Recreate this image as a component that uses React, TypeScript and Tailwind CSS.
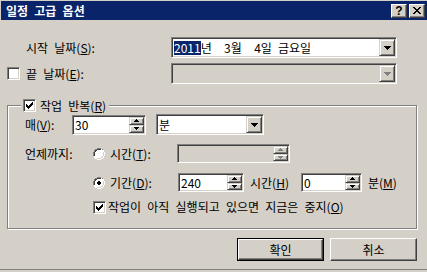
import React from "react";

const sunken =
  "border border-t-[#808080] border-l-[#808080] border-b-white border-r-white shadow-[inset_1px_1px_0_#404040,inset_-1px_-1px_0_#d4d0c8]";
const smallRaised =
  "border border-t-[#d4d0c8] border-l-[#d4d0c8] border-b-[#404040] border-r-[#404040] shadow-[inset_1px_1px_0_#fff,inset_-1px_-1px_0_#808080] bg-[#d4d0c8]";

function DownArrow({ disabled }: { disabled?: boolean }) {
  return (
    <svg width="7" height="4" viewBox="0 0 7 4" shapeRendering="crispEdges">
      <path d="M0 0H7V1H6V2H5V3H4V4H3V3H2V2H1V1H0Z" fill={disabled ? "#808080" : "#000"} />
    </svg>
  );
}

function SmallArrow({ up, disabled }: { up?: boolean; disabled?: boolean }) {
  return (
    <svg width="5" height="3" viewBox="0 0 5 3" shapeRendering="crispEdges">
      <path
        d={up ? "M2 0H3V1H4V2H5V3H0V2H1V1H2Z" : "M0 0H5V1H4V2H3V3H2V2H1V1H0Z"}
        fill={disabled ? "#808080" : "#000"}
      />
    </svg>
  );
}

function Combo({ className, disabled, children }: { className: string; disabled?: boolean; children?: React.ReactNode }) {
  return (
    <div className={`${className} h-[21px] flex p-[1px] ${sunken} ${disabled ? "bg-[#d4d0c8]" : "bg-white"}`}>
      <div className="flex-1 flex items-center pl-[1px] whitespace-pre overflow-hidden">{children}</div>
      <div className={`w-[16px] h-[17px] flex items-center justify-center ${smallRaised}`}>
        <DownArrow disabled={disabled} />
      </div>
    </div>
  );
}

function Spinner({ className, value, disabled }: { className: string; value?: string; disabled?: boolean }) {
  return (
    <div className={`${className} flex p-[1px] ${sunken} ${disabled ? "bg-[#d4d0c8]" : "bg-white"}`}>
      <div className="flex-1 flex items-center pl-[1px]">{value}</div>
      <div className="w-[15px] flex flex-col">
        <div className={`flex-1 flex items-center justify-center ${smallRaised}`}>
          <SmallArrow up disabled={disabled} />
        </div>
        <div className={`flex-1 flex items-center justify-center ${smallRaised}`}>
          <SmallArrow disabled={disabled} />
        </div>
      </div>
    </div>
  );
}

function Checkbox({ checked }: { checked?: boolean }) {
  return (
    <div className={`w-[13px] h-[13px] shrink-0 bg-white flex items-center justify-center ${sunken}`}>
      {checked && (
        <svg width="7" height="7" viewBox="0 0 7 7" shapeRendering="crispEdges">
          <path d="M6 0H7V3H6V4H5V5H4V6H3V7H2V6H1V5H0V2H1V3H2V4H3V3H4V2H5V1H6Z" fill="#000" />
        </svg>
      )}
    </div>
  );
}

function Radio({ checked }: { checked?: boolean }) {
  return (
    <svg width="12" height="12" viewBox="0 0 12 12" shapeRendering="crispEdges" className="shrink-0">
      <path d="M4 0H8V1H10V2H11V4H12V8H11V10H10V11H8V12H4V11H2V10H1V8H0V4H1V2H2V1H4Z" fill="#fff" />
      <path d="M4 0H8V1H10V2H9V1H4V2H2V4H1V8H0V4H1V2H2V1H4Z" fill="#808080" />
      <path d="M4 1H8V2H4V3H3V4H2V8H1V4H2V2H4Z" fill="#404040" />
      <path d="M4 2H8V3H9V4H10V8H9V9H8V10H4V9H3V8H2V4H3V3H4Z" fill="#fff" />
      <path d="M10 4H11V8H10V10H8V11H4V10H8V9H9V8H10Z" fill="#d4d0c8" />
      {checked && <path d="M5 4H7V5H8V7H7V8H5V7H4V5H5Z" fill="#000" />}
    </svg>
  );
}

function TitleBtn({ children }: { children: React.ReactNode }) {
  return (
    <div className="w-[16px] h-[14px] bg-[#d4d0c8] border border-t-white border-l-white border-b-[#404040] border-r-[#404040] shadow-[inset_-1px_-1px_0_#808080] flex items-center justify-center text-black font-bold text-[12px] leading-[12px] font-['Liberation_Sans',sans-serif]">
      {children}
    </div>
  );
}

function Button({ children, isDefault }: { children: React.ReactNode; isDefault?: boolean }) {
  if (isDefault) {
    return (
      <div className="w-[87px] h-[23px] border border-black">
        <div className="w-full h-full border border-t-white border-l-white border-b-[#404040] border-r-[#404040] shadow-[inset_-1px_-1px_0_#808080] flex items-center justify-center">
          {children}
        </div>
      </div>
    );
  }
  return (
    <div className="w-[87px] h-[23px] border border-t-white border-l-white border-b-[#404040] border-r-[#404040] shadow-[inset_-1px_-1px_0_#808080] flex items-center justify-center">
      {children}
    </div>
  );
}

export default function App() {
  return (
    <div className="w-[427px] h-[272px] bg-[#d4d0c8] overflow-hidden flex flex-col text-[12px] leading-[14px] [word-spacing:3.5px] text-black font-['Noto_Sans_CJK_KR','Noto_Sans',sans-serif] shadow-[inset_0_-2px_0_#d4d0c8,inset_0_-3px_0_#808080]">
      {/* Title bar */}
      <div className="mt-[1px] ml-[1px] h-[19px] shrink-0 bg-[#0a246a] flex items-center justify-between pl-[5px] pr-[2px]">
        <span className="text-white font-bold text-[12px] leading-[15px]">일정 고급 옵션</span>
        <div className="flex gap-[2px]">
          <TitleBtn>?</TitleBtn>
          <TitleBtn>
            <svg width="8" height="7" viewBox="0 0 8 7" shapeRendering="crispEdges">
              <path
                d="M0 0H2V1H3V2H5V1H6V0H8V1H7V2H6V3H5V4H6V5H7V6H8V7H6V6H5V5H3V6H2V7H0V6H1V5H2V4H3V3H2V2H1V1H0Z"
                fill="#000"
              />
            </svg>
          </TitleBtn>
        </div>
      </div>

      {/* Start date */}
      <div className="mt-[17px] h-[21px] flex items-center">
        <span className="pl-[26px] w-[171px]">
          시작 날짜(<span className="underline">S</span>):
        </span>
        <Combo className="w-[226px]">
          <span className="bg-[#0a246a] text-white">2011</span>년  3월  4일 금요일
        </Combo>
      </div>

      {/* End date */}
      <div className="mt-[5px] h-[21px] flex items-center">
        <div className="ml-[7px] w-[164px] flex items-center gap-[6px]">
          <Checkbox />
          <span>
            끝 날짜(<span className="underline">E</span>):
          </span>
        </div>
        <Combo className="w-[226px]" disabled />
      </div>

      {/* Group box */}
      <div className="mt-[21px] ml-[7px] w-[410px] h-[124px] shrink-0 relative border border-[#808080] shadow-[inset_1px_1px_0_#fff,1px_1px_0_#fff] flex flex-col">
        <div className="absolute left-[13px] top-[-7px] h-[13px] flex items-center gap-[4px] bg-[#d4d0c8] pl-[2px] pr-[3px]">
          <Checkbox checked />
          <span>
            작업 반복(<span className="underline">R</span>)
          </span>
        </div>

        {/* Every */}
        <div className="mt-[7px] h-[23px] flex items-center">
          <span className="pl-[17px] w-[64px]">
            매(<span className="underline">V</span>):
          </span>
          <Spinner className="w-[74px] h-[20px]" value="30" />
          <Combo className="ml-[10px] w-[108px]">분</Combo>
        </div>

        {/* Until: time */}
        <div className="mt-[8px] h-[19px] flex items-center">
          <span className="pl-[17px] w-[85px]">언제까지:</span>
          <div className="w-[84px] flex items-center gap-[5px]">
            <Radio />
            <span>
              시간(<span className="underline">T</span>):
            </span>
          </div>
          <Spinner className="w-[113px] h-[19px]" disabled />
        </div>

        {/* Until: duration */}
        <div className="mt-[10px] h-[19px] flex items-center">
          <span className="w-[85px]" />
          <div className="w-[85px] flex items-center gap-[5px]">
            <Radio checked />
            <span>
              기간(<span className="underline">D</span>):
            </span>
          </div>
          <Spinner className="w-[66px] h-[19px]" value="240" />
          <span className="w-[57px] pl-[6px]">
            시간(<span className="underline">H</span>)
          </span>
          <Spinner className="w-[61px] h-[19px]" value="0" />
          <span className="pl-[6px]">
            분(<span className="underline">M</span>)
          </span>
        </div>

        {/* Stop */}
        <div className="mt-[7px] h-[16px] flex items-center pl-[85px] gap-[2px]">
          <Checkbox checked />
          <span>
            작업이 아직 실행되고 있으면 지금은 중지(<span className="underline">O</span>)
          </span>
        </div>
      </div>

      {/* Buttons */}
      <div className="mt-[9px] flex justify-end gap-[6px] pr-[10px]">
        <Button isDefault>확인</Button>
        <Button>취소</Button>
      </div>
    </div>
  );
}
